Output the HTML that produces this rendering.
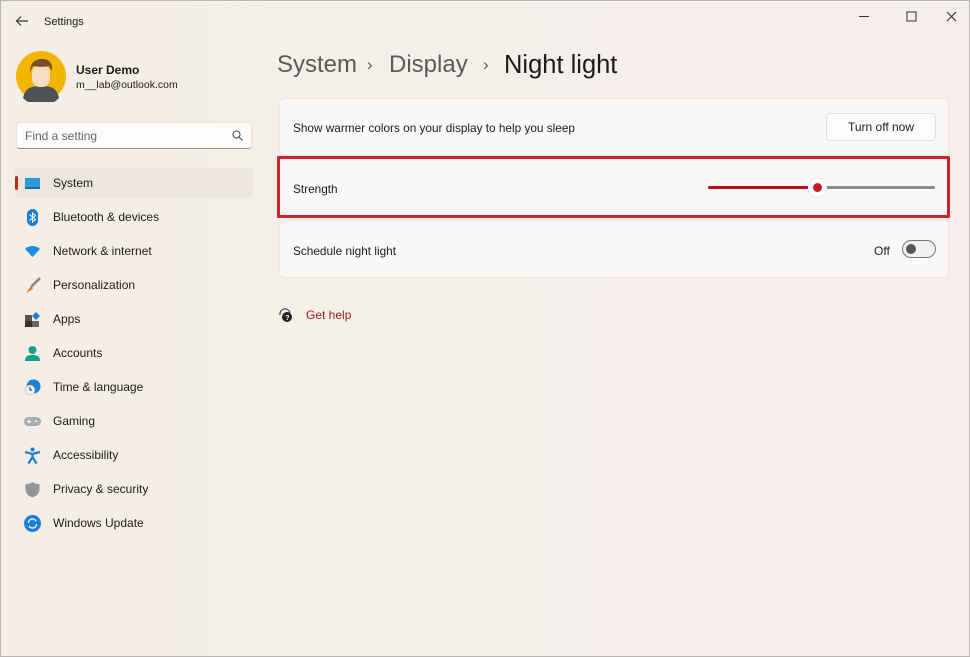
<!DOCTYPE html>
<html><head><meta charset="utf-8"><style>
*{margin:0;padding:0;box-sizing:border-box}
body{width:970px;height:657px;overflow:hidden;font-family:"Liberation Sans",sans-serif;background:linear-gradient(90deg,#f4eee5 0%,#f5efea 40%,#f6eeec 100%);position:relative;color:#1b1b1b;border:1px solid #b9b5b0}
.a{position:absolute}
.nav{position:absolute;left:14px;width:238px;height:30px;font-size:12px;display:flex;align-items:center}
.nav span{position:absolute;left:38px}
.ic{position:absolute;left:9px;width:17px;height:17px}
.card{position:absolute;left:278px;width:670px;background:#fbf9f8;border-radius:5px;border:1px solid #ece7e4}
.lbl{position:absolute;left:13px;font-size:11.8px}
.bc{position:absolute;top:50px;font-size:25px;color:#5e5a58;white-space:nowrap}
</style></head><body>
<svg class="a" style="left:14px;top:14px" width="14" height="12"><path d="M13 6H2M6 1.5L1.5 6 6 10.5" stroke="#333" stroke-width="1.2" fill="none"/></svg>
<div class="a" style="left:43px;top:15px;font-size:11px">Settings</div>
<svg class="a" style="left:858px;top:10px" width="100" height="12"><path d="M0 5.5h10" stroke="#333"/><path d="M48 1h9v9h-9z" stroke="#333" fill="none"/><path d="M88 1l9 9M97 1l-9 9" stroke="#333" stroke-width="1.1"/></svg>
<svg class="a" style="left:14px;top:49px" width="52" height="52"><circle cx="26" cy="26" r="25" fill="#f3b600"/><path d="M8 48c2-10 8-12 18-12s16 2 18 12a25 25 0 0 1-36 0z" fill="#4d5257"/><rect x="17" y="15" width="18" height="22" rx="8" fill="#f6dcc3"/><path d="M15 22c0-10 6-13 12-13s11 3 10 12l-3-5c-4 1-10 1-16 0z" fill="#7a4a2c"/></svg>
<div class="a" style="left:75px;top:62px;font-size:12px;font-weight:bold">User Demo</div>
<div class="a" style="left:75px;top:78px;font-size:10.5px">m__lab@outlook.com</div>
<div class="a" style="left:15px;top:121px;width:236px;height:27px;background:#fdfcfb;border:1px solid #e6e2de;border-bottom-color:#8a8a8a;border-radius:4px"><span class="a" style="left:8px;top:6px;font-size:12px;color:#666">Find a setting</span><svg class="a" style="left:215px;top:7px" width="11" height="11"><circle cx="4.5" cy="4.5" r="3.5" stroke="#444" fill="none"/><path d="M7 7l3.5 3.5" stroke="#444"/></svg></div>
<div class="a" style="left:14px;top:167px;width:238px;height:30px;background:#ece6df;border-radius:4px"></div>
<div class="a" style="left:14px;top:175px;width:3px;height:14px;background:#c42b1c;border-radius:2px"></div>
<div class="nav" style="top:167px"><svg class="ic" viewBox="0 0 17 17"><rect x="1" y="3" width="15" height="11" fill="#2a9bd6"/><rect x="1" y="12" width="15" height="2" fill="#1b6aa0"/></svg><span>System</span></div>
<div class="nav" style="top:201px"><svg class="ic" viewBox="0 0 17 17"><rect x="3" y="0" width="11" height="17" rx="5.5" fill="#1a7fd8"/><path d="M5.5 5.5l6 5-3 2.5v-9l3 2.5-6 5" stroke="#fff" fill="none"/></svg><span>Bluetooth &amp; devices</span></div>
<div class="nav" style="top:235px"><svg class="ic" viewBox="0 0 17 17"><path d="M1 6a11 11 0 0 1 15 0L8.5 14z" fill="#1a8ee0"/></svg><span>Network &amp; internet</span></div>
<div class="nav" style="top:269px"><svg class="ic" viewBox="0 0 17 17"><path d="M16 1L7 10" stroke="#888" stroke-width="2.5"/><path d="M7 9l-5 7 7-4z" fill="#e87c2c"/></svg><span>Personalization</span></div>
<div class="nav" style="top:303px"><svg class="ic" viewBox="0 0 17 17"><rect x="1" y="4" width="7" height="6" fill="#555"/><rect x="1" y="10" width="7" height="6" fill="#333"/><rect x="8" y="10" width="7" height="6" fill="#666"/><path d="M12 1l4 4-4 4-4-4z" fill="#1a7fd8"/></svg><span>Apps</span></div>
<div class="nav" style="top:337px"><svg class="ic" viewBox="0 0 17 17"><circle cx="8.5" cy="5" r="4" fill="#1aa08a"/><path d="M1 16c0-5 3-6 7.5-6s7.5 1 7.5 6z" fill="#1aa08a"/></svg><span>Accounts</span></div>
<div class="nav" style="top:371px"><svg class="ic" viewBox="0 0 17 17"><circle cx="9.5" cy="7.5" r="7" fill="#1a7fd8"/><circle cx="6" cy="11" r="5" fill="#eef0f2" stroke="#999" stroke-width=".5"/><path d="M6 8v3h2" stroke="#333" fill="none"/></svg><span>Time &amp; language</span></div>
<div class="nav" style="top:405px"><svg class="ic" viewBox="0 0 17 17"><rect x="0" y="4" width="17" height="9" rx="4.5" fill="#a7acb3"/><path d="M3 8.5h4M5 6.5v4" stroke="#fff"/><circle cx="12" cy="8" r="1" fill="#fff"/></svg><span>Gaming</span></div>
<div class="nav" style="top:439px"><svg class="ic" viewBox="0 0 17 17"><circle cx="8.5" cy="2.5" r="2" fill="#1a7fd8"/><path d="M1 5l7.5 2 7.5-2M8.5 7v3l-4 6.5M8.5 10l4 6.5" stroke="#1a7fd8" stroke-width="2.2" fill="none"/></svg><span>Accessibility</span></div>
<div class="nav" style="top:473px"><svg class="ic" viewBox="0 0 17 17"><path d="M8.5 1c3 2 5 2 7 2v5c0 5-4 7.5-7 8.5C5.5 15.5 1.5 13 1.5 8V3c2 0 4 0 7-2z" fill="#8e959c"/></svg><span>Privacy &amp; security</span></div>
<div class="nav" style="top:507px"><svg class="ic" viewBox="0 0 17 17"><circle cx="8.5" cy="8.5" r="8.5" fill="#1a7fd8"/><path d="M4.5 8a4 4 0 0 1 7.5-2M12.5 9a4 4 0 0 1-7.5 2" stroke="#fff" stroke-width="1.3" fill="none"/></svg><span>Windows Update</span></div>

<div class="bc" style="left:276px;font-size:24px">System</div>
<div class="bc" style="left:366px;top:54px;font-size:17px">›</div>
<div class="bc" style="left:388px;font-size:24px">Display</div>
<div class="bc" style="left:482px;top:54px;font-size:17px">›</div>
<div class="bc" style="left:503px;font-size:25.5px;color:#1b1b1b">Night light</div>

<div class="card" style="top:97px;height:58px"><div class="lbl" style="top:22px">Show warmer colors on your display to help you sleep</div>
<div class="a" style="left:546px;top:14px;width:110px;height:28px;background:#fdfcfc;border:1px solid #e4e0de;border-radius:4px;font-size:12px;text-align:center;line-height:26px">Turn off now</div></div>
<div class="card" style="top:157px;height:58px"><div class="lbl" style="top:23px">Strength</div></div>
<div class="a" style="left:276px;top:155px;width:673px;height:62px;border:3px solid #d0242c;border-radius:1px"></div>
<div class="a" style="left:707px;top:185px;width:102px;height:3px;background:#b5121b;border-radius:2px"></div>
<div class="a" style="left:825px;top:185px;width:109px;height:3px;background:#8a8a8a;border-radius:2px"></div>
<div class="a" style="left:807px;top:177px;width:19px;height:19px;border-radius:50%;background:#fff;box-shadow:0 0 1px #aaa"></div>
<div class="a" style="left:812px;top:182px;width:9px;height:9px;border-radius:50%;background:#c41a24"></div>
<div class="card" style="top:219px;height:58px"><div class="lbl" style="top:23px">Schedule night light</div>
<div class="a" style="left:594px;top:23px;font-size:12px">Off</div>
<div class="a" style="left:622px;top:19px;width:34px;height:18px;border:1px solid #777;border-radius:9px;background:#f3f1f0"><div class="a" style="left:3px;top:3px;width:10px;height:10px;border-radius:50%;background:#555"></div></div></div>
<svg class="a" style="left:277px;top:306px" width="16" height="16"><path d="M2 8a5 5 0 0 1 10-2" stroke="#333" fill="none"/><circle cx="9" cy="10" r="5" fill="#222"/><text x="7.3" y="13" font-size="7" fill="#fff" font-family="Liberation Sans" font-weight="bold">?</text></svg>
<div class="a" style="left:305px;top:307px;font-size:12px;color:#9b1a1e">Get help</div>
</body></html>
